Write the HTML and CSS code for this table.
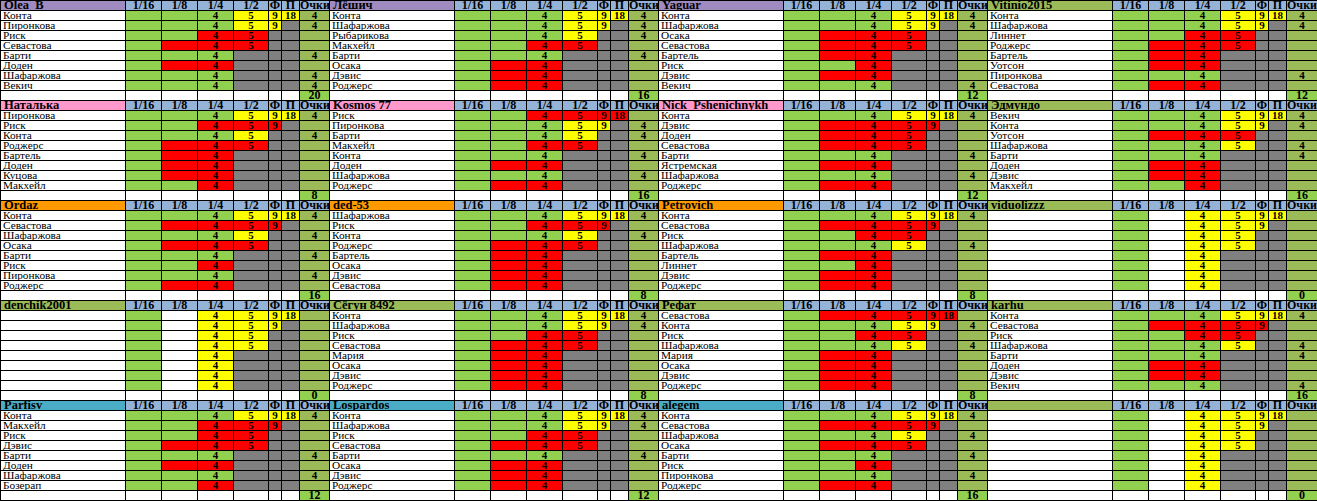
FILE: index.html
```html
<!DOCTYPE html>
<html lang="ru">
<head>
<meta charset="utf-8">
<title>Прогнозы</title>
<link rel="stylesheet" href="styles.css">
</head>
<body>
<table class="sheet">
<colgroup>
<col class="c-nm"><col class="c-r"><col class="c-r"><col class="c-r"><col class="c-h"><col class="c-f"><col class="c-p"><col class="c-o">
<col class="c-nm"><col class="c-r"><col class="c-r"><col class="c-r"><col class="c-h"><col class="c-f"><col class="c-p"><col class="c-o">
<col class="c-nm"><col class="c-r"><col class="c-r"><col class="c-r"><col class="c-h"><col class="c-f"><col class="c-p"><col class="c-o">
<col class="c-nm"><col class="c-r"><col class="c-r"><col class="c-r"><col class="c-h"><col class="c-f"><col class="c-p"><col class="c-o c-last">
</colgroup>
<tbody id="rows"></tbody>
</table>
<script src="script.js"></script>
</body>
</html>
```
FILE: styles.css
```css
html, body {
  margin: 0;
  padding: 0;
  background: #ffffff;
}
body {
  font-family: "Liberation Serif", "Times New Roman", serif;
  color: #000;
}
.sheet {
  border-collapse: collapse;
  table-layout: fixed;
  width: 1317px;
}
.c-nm { width: 125px; }
.c-r { width: 36px; }
.c-h { width: 35px; }
.c-f { width: 13px; }
.c-p { width: 18px; }
.c-o { width: 30px; }
.c-o.c-last { width: 31px; }

.sheet tr { height: 10px; }
.sheet td {
  border: 1px solid #000;
  padding: 0;
  height: 9px;
  line-height: 9px;
  font-size: 11px;
  font-weight: bold;
  text-align: center;
  white-space: nowrap;
  overflow: hidden;
  background: #fff;
}
.sheet td.nm {
  text-align: left;
  padding-left: 2px;
  font-size: 11.3px;
  font-weight: normal;
}
.sheet td.hn {
  text-align: left;
  padding-left: 3px;
  font-size: 12.5px;
  font-weight: bold;
}
.sheet td.h {
  font-size: 12px;
  font-weight: bold;
  background: #95b3d7;
}
.sheet td.pu { background: #9f8bbf; }
.sheet td.pk { background: #ff99cc; }
.sheet td.or { background: #ff9900; }
.sheet td.ol { background: #9bbb59; }
.sheet td.te { background: #4bacc6; }

.sheet td.g { background: #92d050; }
.sheet td.r { background: #ff0000; }
.sheet td.y { background: #ffff00; }
.sheet td.x { background: #808080; }
.sheet td.w { background: #ffffff; }
.sheet td.pt { background: #9bbb59; }
.sheet td.tot { background: #92d050; font-size: 12px; }
```
FILE: script.js
```js
(function () {
  var EMPTY = ":gwyyyy,:gwyyyx,:gwyyxx,:gwyyxx,:gwyxxx,:gwyxxx,:gwyxxx,:gwyxxx";
  var bands = [
    [
      ["Olea_B", "pu", "Конта:gggyyy,Пиронкова:gggyyx,Риск:ggrrxx,Севастова:grrrxx,Барти:gggxxx,Доден:grrxxx,Шафаржова:gggxxx,Векич:gggxxx"],
      ["Лёшич", "pu", "Конта:gggyyy,Шафаржова:gggyyx,Рыбарикова:gggyxx,Макхейл:ggrrxx,Барти:gggxxx,Осака:grrxxx,Дэвис:grrxxx,Роджерс:grrxxx"],
      ["Yaguar", "pu", "Конта:gggyyy,Шафаржова:gggyyx,Осака:grrrxx,Севастова:grrrxx,Бартель:grrxxx,Риск:ggrxxx,Дэвис:grrxxx,Векич:gggxxx"],
      ["Vitinio2015", "ol", "Конта:gggyyy,Шафаржова:gggyyx,Линнет:ggrrxx,Роджерс:grrrxx,Бартель:grrxxx,Уотсон:grrxxx,Пиронкова:gggxxx,Севастова:grrxxx"]
    ],
    [
      ["Наталька", "pk", "Пиронкова:gggyyy,Риск:ggrrrx,Конта:gggyxx,Роджерс:grrrxx,Бартель:grrxxx,Доден:grrxxx,Куцова:grrxxx,Макхейл:ggrxxx"],
      ["Kosmos 77", "pk", "Риск:ggrrrr,Пиронкова:gggyyx,Барти:gggyxx,Макхейл:ggrrxx,Конта:gggxxx,Доден:grrxxx,Шафаржова:gggxxx,Роджерс:grrxxx"],
      ["Nick_Pshenichnykh", "pk", "Конта:gggyyy,Дэвис:grrrrx,Доден:grrrxx,Севастова:grrrxx,Барти:gggxxx,Ястремская:grrxxx,Шафаржова:gggxxx,Роджерс:grrxxx"],
      ["Эдмундо", "ol", "Векич:gggyyy,Конта:gggyyx,Уотсон:grrrxx,Шафаржова:gggyxx,Барти:gggxxx,Доден:grrxxx,Дэвис:grrxxx,Макхейл:ggrxxx"]
    ],
    [
      ["Ordaz", "or", "Конта:gggyyy,Севастова:grrrrx,Шафаржова:gggyxx,Осака:grrrxx,Барти:gggxxx,Риск:ggrxxx,Пиронкова:gggxxx,Роджерс:grrxxx"],
      ["ded-53", "or", "Шафаржова:gggyyy,Риск:ggrrrx,Конта:gggyxx,Роджерс:grrrxx,Бартель:grrxxx,Осака:grrxxx,Дэвис:grrxxx,Севастова:grrxxx"],
      ["Petrovich", "or", "Конта:gggyyy,Севастова:grrrrx,Риск:ggrrxx,Шафаржова:gggyxx,Бартель:grrxxx,Линнет:ggrxxx,Дэвис:grrxxx,Роджерс:grrxxx"],
      ["viduolizzz", "ol", EMPTY]
    ],
    [
      ["denchik2001", "ol", EMPTY],
      ["Сёгун 8492", "ol", "Конта:gggyyy,Шафаржова:gggyyx,Риск:ggrrxx,Севастова:grrrxx,Мария:grrxxx,Осака:grrxxx,Дэвис:grrxxx,Роджерс:grrxxx"],
      ["Рефат", "ol", "Севастова:grrrrr,Конта:gggyyx,Риск:ggrrxx,Шафаржова:gggyxx,Мария:grrxxx,Осака:grrxxx,Дэвис:grrxxx,Роджерс:grrxxx"],
      ["karhu", "ol", "Конта:gggyyy,Севастова:grrrrx,Риск:ggrrxx,Шафаржова:gggyxx,Барти:gggxxx,Доден:grrxxx,Дэвис:grrxxx,Векич:gggxxx"]
    ],
    [
      ["Parfisv", "te", "Конта:gggyyy,Макхейл:ggrrrx,Риск:ggrrxx,Дэвис:grrrxx,Барти:gggxxx,Доден:grrxxx,Шафаржова:gggxxx,Бозерап:ggrxxx"],
      ["Lospardos", "te", "Конта:gggyyy,Шафаржова:gggyyx,Риск:ggrrxx,Севастова:grrrxx,Барти:gggxxx,Осака:grrxxx,Дэвис:grrxxx,Роджерс:grrxxx"],
      ["alegem", "te", "Конта:gggyyy,Севастова:grrrrx,Шафаржова:gggyxx,Осака:grrrxx,Барти:gggxxx,Риск:ggrxxx,Пиронкова:gggxxx,Роджерс:grrxxx"],
      ["", "ol", EMPTY]
    ]
  ];
  var heads = ["1/16", "1/8", "1/4", "1/2", "Ф", "П", "Очки"];
  var vals = ["", "", "4", "5", "9", "18"];
  var body = document.getElementById("rows");

  function cell(tr, cls, text) {
    var td = document.createElement("td");
    td.className = cls;
    td.textContent = text;
    tr.appendChild(td);
  }

  bands.forEach(function (band) {
    var parsed = band.map(function (b) {
      return b[2].split(",").map(function (s) {
        var i = s.lastIndexOf(":");
        return [s.slice(0, i), s.slice(i + 1)];
      });
    });
    var tr = document.createElement("tr");
    band.forEach(function (b) {
      cell(tr, "hn " + b[1], b[0]);
      heads.forEach(function (h) { cell(tr, "h", h); });
    });
    body.appendChild(tr);

    for (var r = 0; r < 8; r++) {
      tr = document.createElement("tr");
      parsed.forEach(function (rows) {
        var name = rows[r][0], codes = rows[r][1];
        cell(tr, "nm", name);
        for (var k = 0; k < 6; k++) {
          var c = codes.charAt(k);
          var v = (c === "x" || c === "w") ? "" : vals[k];
          cell(tr, c, v);
        }
        cell(tr, "pt", codes.charAt(2) === "g" ? "4" : "");
      });
      body.appendChild(tr);
    }

    tr = document.createElement("tr");
    parsed.forEach(function (rows) {
      var total = 0;
      rows.forEach(function (row) { if (row[1].charAt(2) === "g") total += 4; });
      for (var k = 0; k < 7; k++) cell(tr, "w", "");
      cell(tr, "tot", String(total));
    });
    body.appendChild(tr);
  });
})();
```
